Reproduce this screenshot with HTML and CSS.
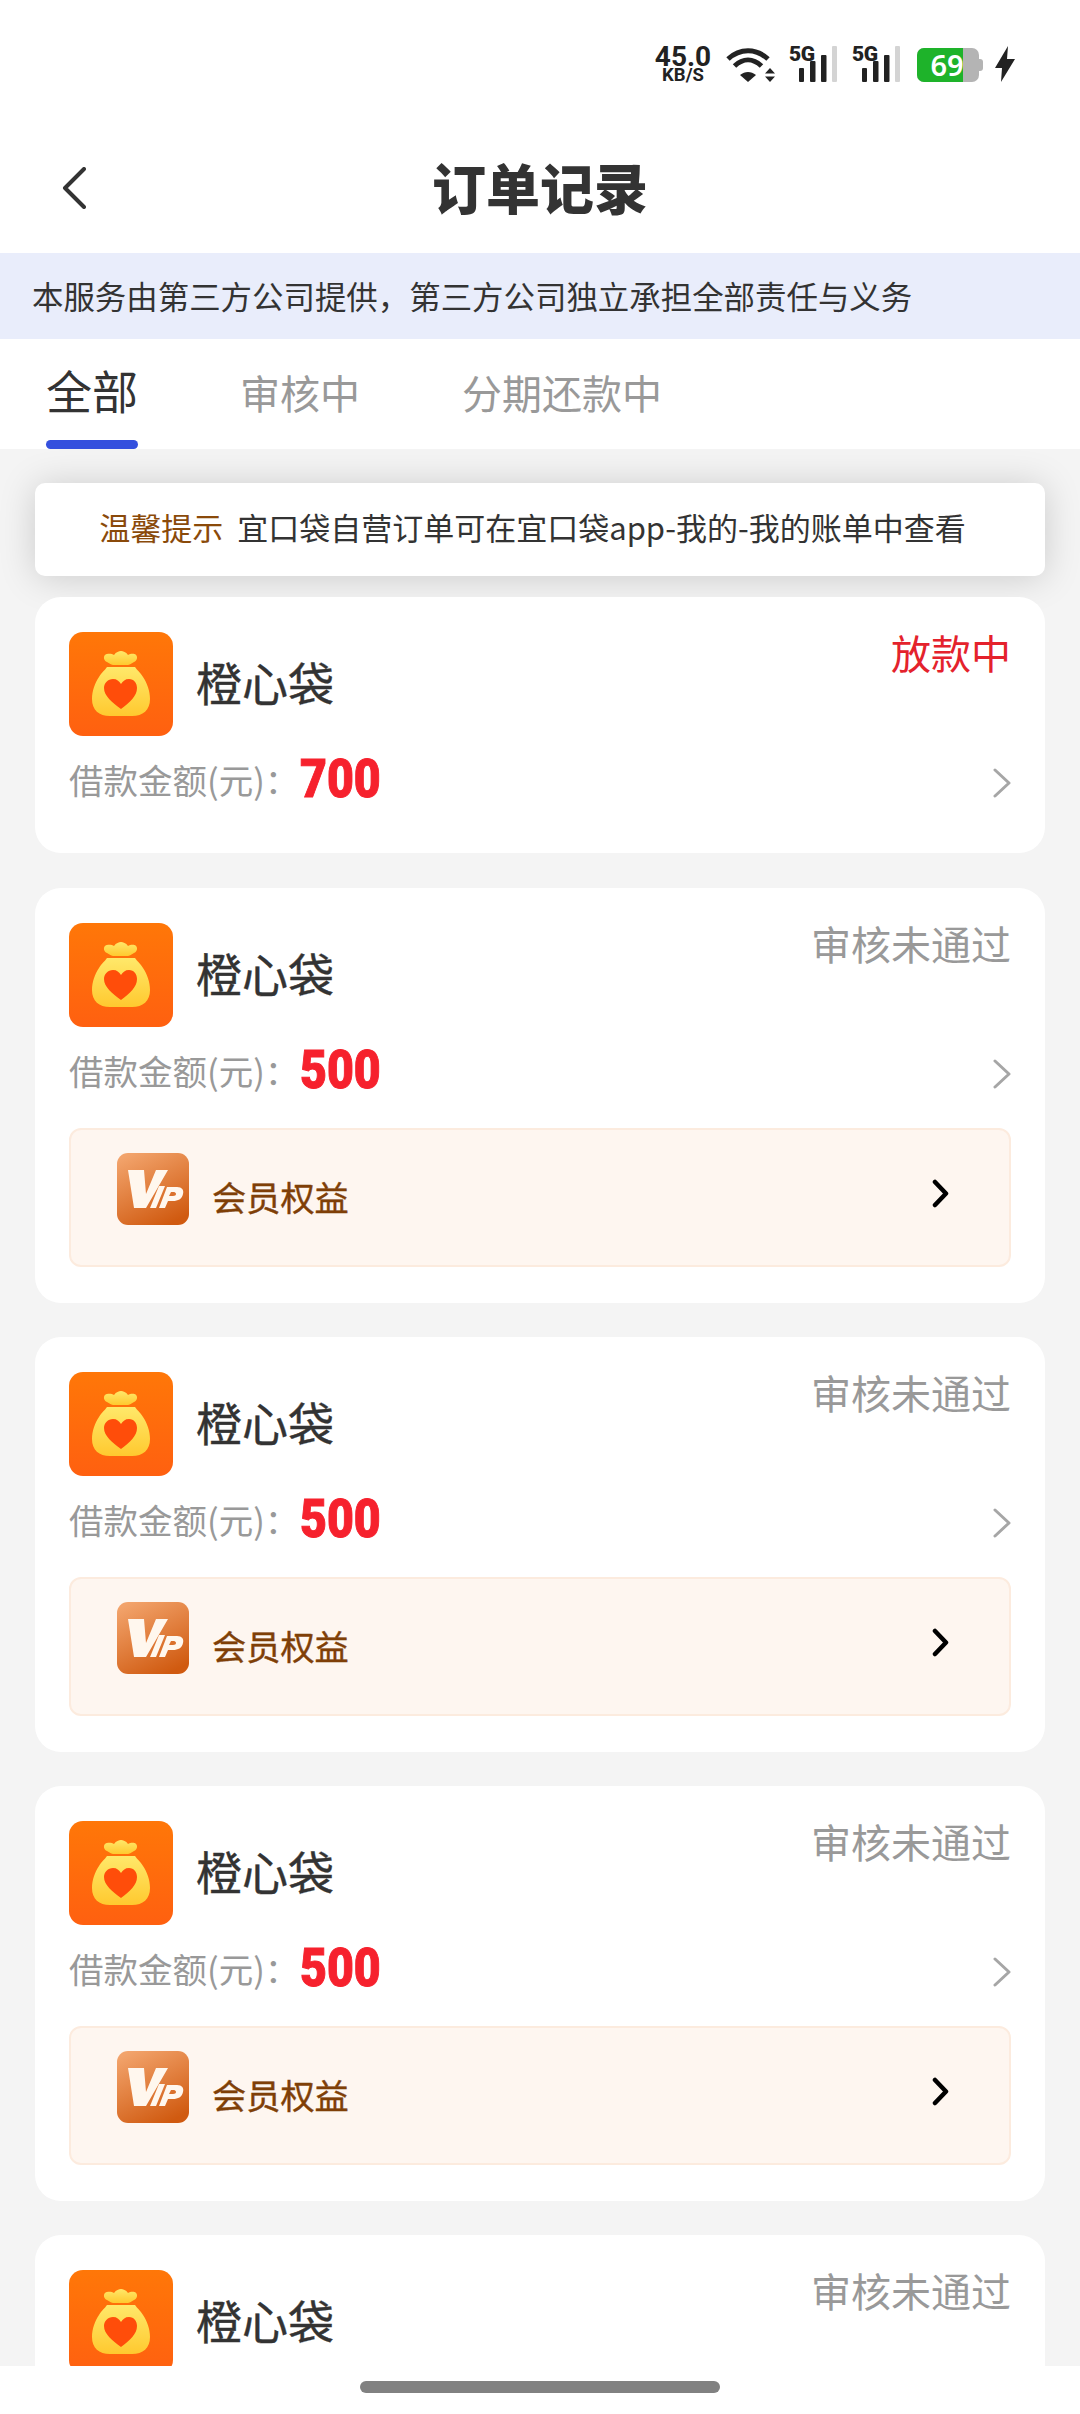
FILE: index.html
```html
<!DOCTYPE html>
<html lang="zh">
<head>
<meta charset="utf-8">
<title>订单记录</title>
<link rel="stylesheet" href="styles.css">
</head>
<body>
<svg class="defs" width="0" height="0" aria-hidden="true">
  <defs>
    <linearGradient id="tile" x1="0" y1="0" x2="0" y2="1"><stop offset="0" stop-color="#ff7708"/><stop offset="1" stop-color="#ff6010"/></linearGradient>
    <linearGradient id="bag" x1="0" y1="0" x2="0" y2="1"><stop offset="0" stop-color="#ffe86a"/><stop offset="1" stop-color="#ffc92f"/></linearGradient>
    <linearGradient id="vip" x1="0.2" y1="0" x2="0.7" y2="1"><stop offset="0" stop-color="#f2a36b"/><stop offset="1" stop-color="#d05a10"/></linearGradient>
    <symbol id="logo" viewBox="0 0 104 104">
      <rect width="104" height="104" rx="14" fill="url(#tile)"/>
      <path d="M36 23c3-2 7-1 9 0 2-3 5-4 7-4s5 1 7 4c2-1 6-2 8 0 2 2 1 6-2 7-3 2-5 3-6 3H44c-1 0-3-1-6-3-3-1-4-5-2-7z" fill="url(#bag)"/>
      <path d="M38 35h28c2 3 5 5 8 10 4 6 7 14 7 22 0 11-7 17-18 17H41c-11 0-18-6-18-17 0-8 3-16 7-22 3-5 6-7 8-10z" fill="url(#bag)"/>
      <path d="M52 77C43 70 35 64 35 56c0-5 4-9 9-9 4 0 6 2 8 5 2-3 4-5 8-5 5 0 8 4 8 9 0 8-7 14-16 21z" fill="#ff4d0a"/>
    </symbol>
    <symbol id="vipmark" viewBox="0 0 72 72">
      <rect width="72" height="72" rx="11" fill="url(#vip)"/>
      <path d="M11 17h16l2 24 10-24h12L29 55H17z" fill="#fff7ee"/>
      <path d="M42 33h6l-9 22h-6z" fill="#fff7ee"/>
      <path d="M50 34h10c5 0 7 3 6 7-1 5-5 7-10 7h-5l-3 7h-6zm4 5-2 4h4c2 0 3-1 3-2s-1-2-2-2z" fill="#fff7ee" fill-rule="evenodd"/>
    </symbol>
    <symbol id="signal" viewBox="0 0 52 36">
      <rect x="0" y="22" width="5" height="14" rx="1" fill="#222"/>
      <rect x="11" y="15" width="5.500" height="21" rx="1" fill="#222"/>
      <rect x="22" y="9" width="5.500" height="27" rx="1" fill="#222"/>
      <rect x="33" y="0" width="5" height="36" rx="1" fill="#d4d4d4"/>
    </symbol>
    <symbol id="chev" viewBox="0 0 18 30">
      <path d="M2 2l14 13L2 28" fill="none" stroke="#a6a6a6" stroke-width="3" stroke-linecap="round" stroke-linejoin="round"/>
    </symbol>
    <symbol id="chevdark" viewBox="0 0 18 29">
      <path d="M3 3l11 11.500L3 26" fill="none" stroke="#000" stroke-width="4.500" stroke-linecap="round" stroke-linejoin="round"/>
    </symbol>
  </defs>
</svg>
<div class="page">
  <header class="status">
    <div class="speed"><span class="speed-num">45.0</span><span class="speed-unit">KB/S</span></div>
    <svg class="wifi" viewBox="0 0 50 36">
      <path d="M2 13C14 2 30 2 42 13M8.500 20C17 12 27 12 35.500 20" fill="none" stroke="#222" stroke-width="5"/>
      <path d="M22 36l-8-7c5-4 11-4 16 0z" fill="#222"/>
      <path d="M44 22l5 5.500H39zM44 36l5-5.500H39z" fill="#222"/>
    </svg>
    <div class="sim"><span class="sim-label">5G</span><svg class="sim-bars"><use href="#signal"/></svg></div>
    <div class="sim"><span class="sim-label">5G</span><svg class="sim-bars"><use href="#signal"/></svg></div>
    <div class="battery"><div class="battery-body"><div class="battery-fill"></div><span class="battery-num">69</span></div><div class="battery-nub"></div></div>
    <svg class="bolt" viewBox="0 0 20 36"><path d="M13 0L0 22h7L6 36l14-23h-8z" fill="#222"/></svg>
  </header>
  <nav class="navbar">
    <svg class="back" viewBox="0 0 24 42"><path d="M22 2L3 21l19 19" fill="none" stroke="#333" stroke-width="4" stroke-linecap="round" stroke-linejoin="round"/></svg>
    <h1 class="title">订单记录</h1>
  </nav>
  <div class="banner">本服务由第三方公司提供，第三方公司独立承担全部责任与义务</div>
  <div class="tabs">
    <div class="tab tab-active">全部</div>
    <div class="tab">审核中</div>
    <div class="tab">分期还款中</div>
  </div>
  <main class="list">
    <div class="notice"><span class="notice-tag">温馨提示</span>宜口袋自营订单可在宜口袋app-我的-我的账单中查看</div>

    <section class="card card-first">
      <div class="card-head">
        <svg class="logo"><use href="#logo"/></svg>
        <div class="name">橙心袋</div>
        <div class="state state-red">放款中</div>
      </div>
      <div class="amount-row">
        <span class="amount-label">借款金额(元)：</span><span class="amount">700</span>
        <svg class="chev"><use href="#chev"/></svg>
      </div>
    </section>

    <section class="card">
      <div class="card-head">
        <svg class="logo"><use href="#logo"/></svg>
        <div class="name">橙心袋</div>
        <div class="state">审核未通过</div>
      </div>
      <div class="amount-row">
        <span class="amount-label">借款金额(元)：</span><span class="amount">500</span>
        <svg class="chev"><use href="#chev"/></svg>
      </div>
      <div class="vip">
        <svg class="vip-mark"><use href="#vipmark"/></svg>
        <span class="vip-text">会员权益</span>
        <svg class="vip-chev"><use href="#chevdark"/></svg>
      </div>
    </section>

    <section class="card">
      <div class="card-head">
        <svg class="logo"><use href="#logo"/></svg>
        <div class="name">橙心袋</div>
        <div class="state">审核未通过</div>
      </div>
      <div class="amount-row">
        <span class="amount-label">借款金额(元)：</span><span class="amount">500</span>
        <svg class="chev"><use href="#chev"/></svg>
      </div>
      <div class="vip">
        <svg class="vip-mark"><use href="#vipmark"/></svg>
        <span class="vip-text">会员权益</span>
        <svg class="vip-chev"><use href="#chevdark"/></svg>
      </div>
    </section>

    <section class="card">
      <div class="card-head">
        <svg class="logo"><use href="#logo"/></svg>
        <div class="name">橙心袋</div>
        <div class="state">审核未通过</div>
      </div>
      <div class="amount-row">
        <span class="amount-label">借款金额(元)：</span><span class="amount">500</span>
        <svg class="chev"><use href="#chev"/></svg>
      </div>
      <div class="vip">
        <svg class="vip-mark"><use href="#vipmark"/></svg>
        <span class="vip-text">会员权益</span>
        <svg class="vip-chev"><use href="#chevdark"/></svg>
      </div>
    </section>

    <section class="card">
      <div class="card-head">
        <svg class="logo"><use href="#logo"/></svg>
        <div class="name">橙心袋</div>
        <div class="state">审核未通过</div>
      </div>
    </section>
  </main>
  <div class="home-bar"><div class="home-handle"></div></div>
</div>
</body>
</html>
```
FILE: styles.css
```css
* { box-sizing: border-box; margin: 0; padding: 0; }
html, body { width: 1080px; height: 2414px; overflow: hidden; background: #fff; }
body { font-family: "Noto Sans CJK SC", "Noto Sans", sans-serif; color: #333; }
.defs { position: absolute; }
.page { position: relative; width: 1080px; height: 2414px; display: flex; flex-direction: column; overflow: hidden; background: #f4f4f4; }

.status { height: 90px; flex: none; background: #fff; display: flex; align-items: flex-start; padding: 46px 65px 0 0; justify-content: flex-end; color: #222; }
.speed { width: 58px; margin-right: 14px; display: flex; flex-direction: column; align-items: center; font-family: Roboto, sans-serif; font-weight: 700; }
.speed-num { font-size: 28px; line-height: 22px; }
.speed-unit { font-size: 18.500px; line-height: 15px; }
.wifi { width: 50px; height: 36px; margin-right: 14px; }
.sim { position: relative; width: 63px; height: 36px; }
.sim-label { position: absolute; left: -1px; top: -2px; font-family: Roboto, sans-serif; font-weight: 900; font-size: 21px; line-height: 20px; letter-spacing: -0.500px; }
.sim-bars { position: absolute; left: 9px; top: 0; width: 52px; height: 36px; }
.battery { display: flex; align-items: center; width: 66px; height: 34px; margin: 2px 12px 0 1px; }
.battery-body { position: relative; width: 62px; height: 34px; border-radius: 7px; background: #b4b4b4; }
.battery-fill { width: 46px; height: 34px; background: #1eb32a; border-radius: 7px 0 0 7px; }
.battery-num { position: absolute; left: 13px; top: 0; width: 34px; text-align: center; font-family: "Noto Sans", sans-serif; font-weight: 600; font-size: 29px; line-height: 34px; color: #fff; }
.battery-nub { width: 4px; height: 12px; background: #b4b4b4; border-radius: 0 3px 3px 0; }
.bolt { width: 20px; height: 36px; }

.navbar { height: 163px; flex: none; background: #fff; display: flex; align-items: center; justify-content: center; position: relative; padding-top: 31px; }
.back { position: absolute; left: 62px; top: 77px; width: 24px; height: 42px; }
.title { font-size: 54px; font-weight: 900; line-height: 70px; color: #333; }

.banner { height: 86px; flex: none; background: #e9edfb; padding-left: 32px; font-size: 31.450px; line-height: 86px; color: #333; white-space: nowrap; }

.tabs { height: 110px; flex: none; background: #fff; display: flex; align-items: flex-start; padding-left: 46px; gap: 102px; }
.tab { position: relative; font-size: 40px; line-height: 54px; margin-top: 26px; color: #999; }
.tab-active { font-size: 46px; line-height: 54px; color: #333; margin-top: 23px; }
.tab-active::after { content: ""; position: absolute; left: 0; right: 0; top: 78px; height: 9px; border-radius: 5px; background: #3450de; }

.list { flex: 1; min-height: 0; display: flex; flex-direction: column; gap: 34px; padding: 34px 35px 0; overflow: hidden; }
.notice { height: 93px; flex: none; margin-bottom: -13px; padding-right: 15px; background: #fff; border-radius: 10px; box-shadow: 0 2px 36px rgba(0,0,0,.17); text-align: center; font-size: 31px; line-height: 87px; color: #333; white-space: nowrap; }
.notice-tag { color: #8a4a0a; margin-right: 14px; }

.card { flex: none; height: 415px; background: #fff; border-radius: 26px; padding: 35px 34px 0; }
.card-first { height: 256px; margin-bottom: 1px; }
.card-head { display: flex; align-items: flex-start; height: 104px; }
.logo { width: 104px; height: 104px; flex: none; }
.name { margin: 19px 0 0 23px; font-size: 46px; line-height: 60px; color: #333; flex: 1; -webkit-text-stroke: 0.4px #333; }
.state { font-size: 40px; line-height: 54px; color: #999; margin-top: -7px; }
.state-red { color: #e4222c; }

.amount-row { display: flex; align-items: center; height: 64px; margin-top: 10px; }
.amount-label { font-size: 34.500px; line-height: 50px; color: #999; margin-top: 2px; }
.amount { display: inline-block; margin: 2px 0 0 1px; font-family: Roboto, sans-serif; font-weight: 900; font-size: 54px; line-height: 64px; color: #f6212d; transform: scaleX(0.86); transform-origin: left center; -webkit-text-stroke: 1px #f6212d; }
.chev { width: 18px; height: 30px; margin-left: auto; margin-top: 10px; }

.vip { display: flex; align-items: center; height: 139px; margin-top: 27px; background: #fef6f0; border: 2px solid #fcebde; border-radius: 12px; padding: 0 59px 0 46px; }
.vip-mark { width: 72px; height: 72px; flex: none; margin-top: -17px; }
.vip-text { margin-left: 23px; font-size: 34.200px; line-height: 46px; color: #7f3f07; margin-top: -3px; -webkit-text-stroke: 0.4px #7f3f07; }
.vip-chev { width: 18px; height: 29px; margin-left: auto; margin-top: -9px; }

.home-bar { position: absolute; left: 0; right: 0; bottom: 0; height: 48px; background: #fff; display: flex; justify-content: center; padding-top: 15px; }
.home-handle { width: 360px; height: 12px; border-radius: 6px; background: #818181; }
```
